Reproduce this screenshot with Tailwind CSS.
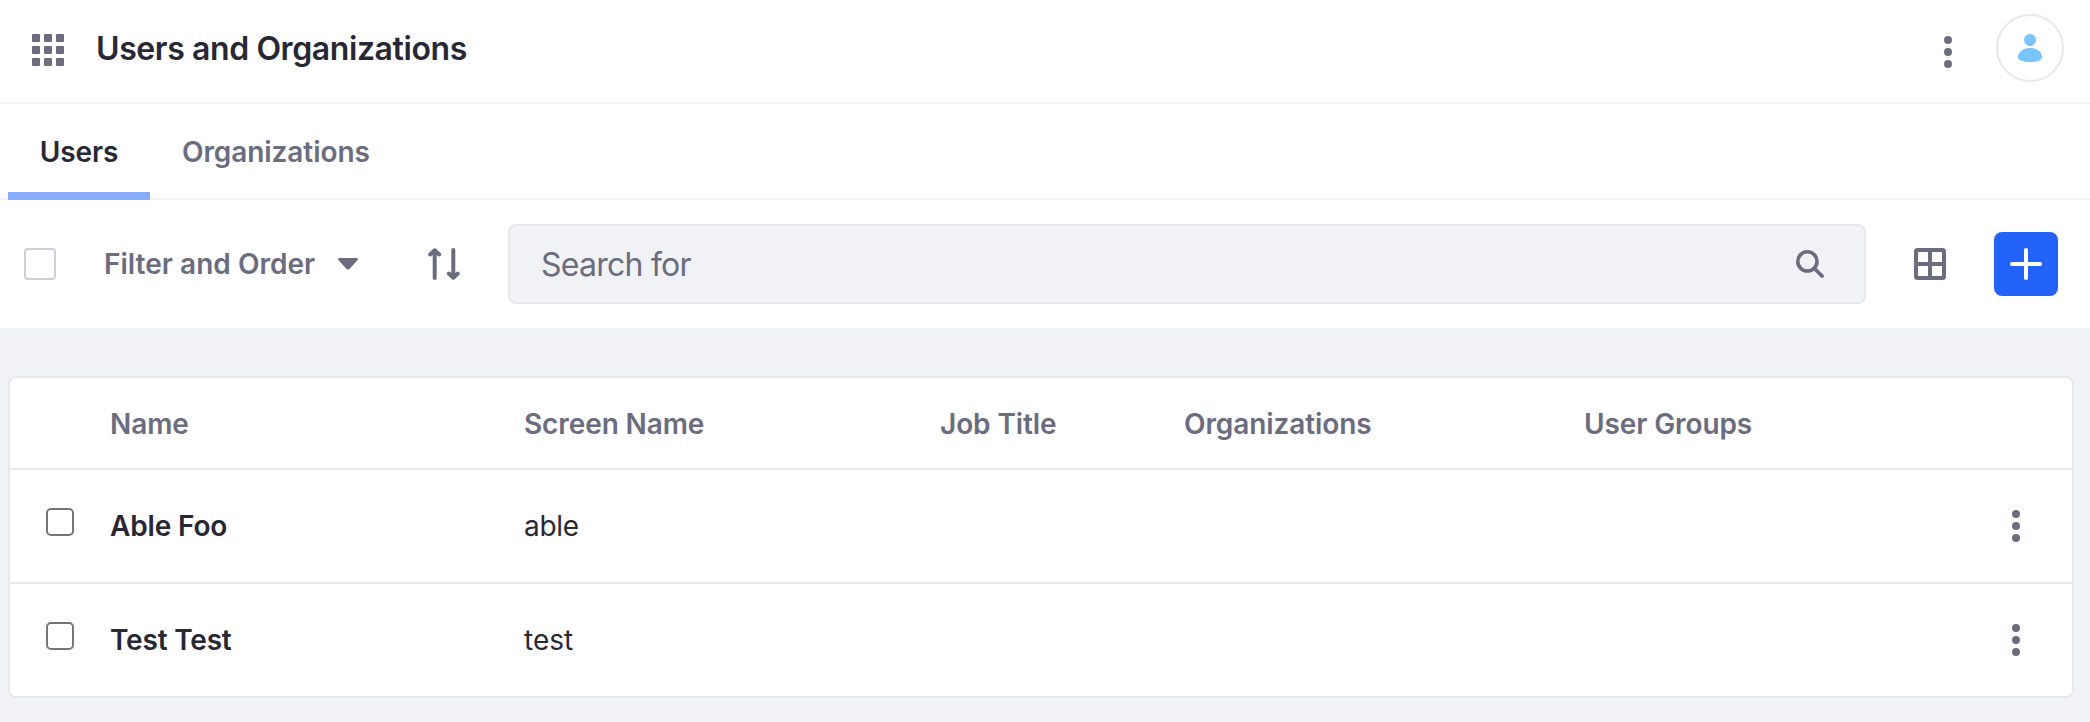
<!DOCTYPE html>
<html lang="en">
<head>
<meta charset="utf-8">
<title>Users and Organizations</title>
<script src="https://cdn.jsdelivr.net/npm/@tailwindcss/browser@4"></script>
</head>
<body class="h-[722px] w-[2090px] overflow-hidden bg-[#f1f2f5] font-[Inter,sans-serif] text-[28px] leading-[42px] text-[#272833] antialiased">
  <header class="flex h-[104px] items-start border-b-2 border-[#f1f2f5] bg-white pl-8 pr-[26px]">
    <svg class="mt-[34px] size-8 shrink-0 fill-[#6b6c7e]" viewBox="0 0 32 32">
      <rect width="8" height="8" rx="1"/><rect x="12" width="8" height="8" rx="1"/><rect x="24" width="8" height="8" rx="1"/>
      <rect y="12" width="8" height="8" rx="1"/><rect x="12" y="12" width="8" height="8" rx="1"/><rect x="24" y="12" width="8" height="8" rx="1"/>
      <rect y="24" width="8" height="8" rx="1"/><rect x="12" y="24" width="8" height="8" rx="1"/><rect x="24" y="24" width="8" height="8" rx="1"/>
    </svg>
    <h1 class="ml-8 mt-[25px] whitespace-nowrap text-[32px] leading-[48px] font-semibold tracking-[-0.4px]"><span>Users and Organizations</span></h1>
    <svg class="ml-auto mt-9 h-8 w-8 fill-[#6b6c7e]" viewBox="0 0 32 32"><circle cx="16" cy="4" r="4"/><circle cx="16" cy="16" r="4"/><circle cx="16" cy="28" r="4"/></svg>
    <div class="ml-8 mt-[14px] flex size-[68px] items-center justify-center rounded-full border-2 border-[#e7e7ed]">
      <svg class="size-8 fill-[#7ac5fb]" viewBox="0 0 32 32"><circle cx="16" cy="8" r="6"/><path d="M16 16c7 0 12 4 12 9 0 3.500-5 5-12 5s-12-1.500-12-5c0-5 5-9 12-9z"/></svg>
    </div>
  </header>

  <nav class="flex h-24 border-b-2 border-[#f1f2f5] bg-white pl-2 font-semibold">
    <a class="flex h-24 w-[142px] justify-center border-b-8 border-[#87acfb] pt-[27px] tracking-[-0.1px]"><span>Users</span></a>
    <a class="pl-8 pt-[27px] tracking-[-0.08px] text-[#6b6c7e]"><span>Organizations</span></a>
  </nav>

  <div class="flex h-32 items-center bg-white pl-6 pr-8">
    <div class="size-8 shrink-0 rounded-sm border-2 border-[#cdced9]"></div>
    <div class="ml-12 flex w-[234px] whitespace-nowrap font-semibold tracking-[0.03px] text-[#6b6c7e]"><span>Filter and Order</span></div>
    <svg class="h-3 w-5 shrink-0 fill-[#6b6c7e]" viewBox="0 0 20 12"><path d="M1.400 0h17.200c1.300 0 1.800 1.400.9 2.300l-8.100 8.600c-.8.800-2 .8-2.800 0L.5 2.300C-.4 1.400.1 0 1.400 0z"/></svg>
    <svg class="ml-[70px] size-8 shrink-0 fill-none stroke-[#6b6c7e] stroke-4" stroke-linecap="round" stroke-linejoin="round" viewBox="0 0 32 32"><path d="M6.700 2.500V30M2.200 6.500l4.500-4.200 4.500 4.200M25.300 2v27.500M20.800 25.500l4.500 4.200 4.500-4.200"/></svg>
    <div class="ml-12 flex h-20 w-[1358px] shrink-0 items-center rounded-lg border-2 border-[#e7e7ed] bg-[#f1f2f5] pl-[31px] pr-10 text-[32px] leading-[48px] tracking-[-0.75px] text-[#6b6c7e]">
      <span class="pt-0.5">Search for</span>
      <svg class="ml-auto size-7 fill-none stroke-[#6b6c7e]" stroke-linecap="round" viewBox="0 0 28 28"><circle cx="11.400" cy="11.400" r="9.600" stroke-width="3.600"/><path stroke-width="3.800" d="M18.500 18.500l7.500 7.500"/></svg>
    </div>
    <svg class="ml-12 size-8 shrink-0 fill-none stroke-[#6b6c7e] stroke-4" viewBox="0 0 32 32"><rect x="2" y="2" width="28" height="28" rx="1.500"/><path d="M16 2v28M2 16h28"/></svg>
    <button class="ml-12 flex size-16 shrink-0 items-center justify-center rounded-lg bg-[#2463fa]">
      <svg class="size-8 fill-none stroke-white stroke-4" stroke-linecap="round" viewBox="0 0 32 32"><path d="M16 2v28M2 16h28"/></svg>
    </button>
  </div>

  <main class="pl-2 pt-12">
    <div class="w-[2066px] rounded-lg border-2 border-[#e7e7ed] bg-white">
      <div class="grid h-[92px] grid-cols-[100px_414px_416px_244px_400px_1fr] items-center whitespace-nowrap border-b-2 border-[#e7e7ed] pt-0.5 font-semibold tracking-[-0.1px] text-[#6b6c7e]">
        <div></div>
        <div><span>Name</span></div>
        <div><span>Screen Name</span></div>
        <div><span>Job Title</span></div>
        <div><span>Organizations</span></div>
        <div><span>User Groups</span></div>
      </div>
      <div class="grid h-[114px] grid-cols-[100px_414px_1fr_64px] items-center border-b-2 border-[#e7e7ed]">
        <div class="mb-2 ml-9 size-7 rounded-[5px] border-2 border-[#767676]"></div>
        <div class="font-semibold tracking-[-0.15px]"><span>Able Foo</span></div>
        <div class="tracking-[-0.3px]"><span>able</span></div>
        <svg class="h-8 w-4 fill-[#6b6c7e]" viewBox="0 0 16 32"><circle cx="8" cy="4" r="4"/><circle cx="8" cy="16" r="4"/><circle cx="8" cy="28" r="4"/></svg>
      </div>
      <div class="grid h-[112px] grid-cols-[100px_414px_1fr_64px] items-center">
        <div class="mb-2 ml-9 size-7 rounded-[5px] border-2 border-[#767676]"></div>
        <div class="font-semibold tracking-[-0.2px]"><span>Test Test</span></div>
        <div><span>test</span></div>
        <svg class="h-8 w-4 fill-[#6b6c7e]" viewBox="0 0 16 32"><circle cx="8" cy="4" r="4"/><circle cx="8" cy="16" r="4"/><circle cx="8" cy="28" r="4"/></svg>
      </div>
    </div>
  </main>
</body>
</html>
